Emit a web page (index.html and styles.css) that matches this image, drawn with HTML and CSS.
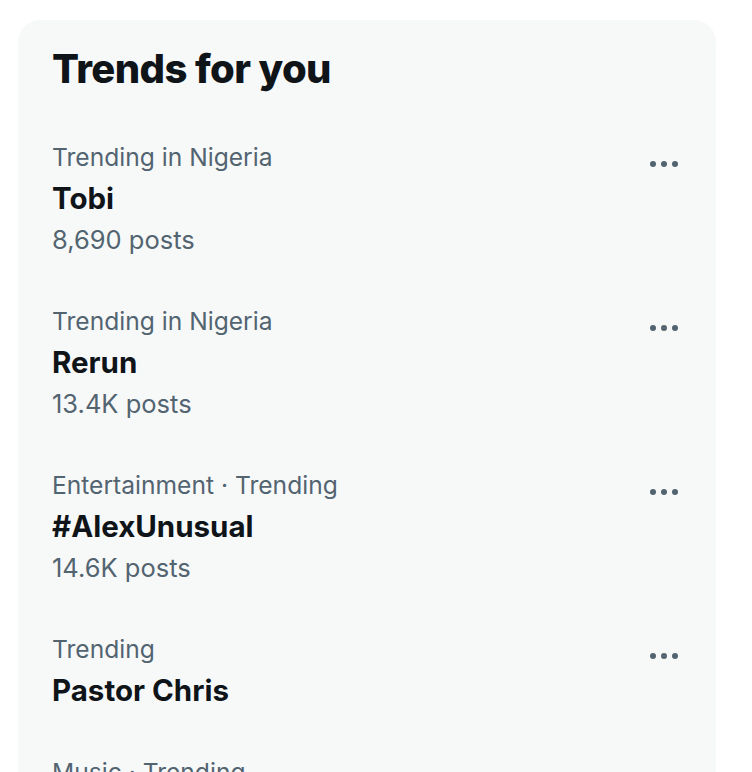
FILE: index.html
```html
<!DOCTYPE html>
<html lang="en">
<head>
<meta charset="utf-8">
<title>Trends for you</title>
<link rel="stylesheet" href="styles.css">
</head>
<body>
<section class="card">
  <h2 class="card-title">Trends for you</h2>
  <div class="trend">
    <div class="trend-info">
      <div class="trend-meta">Trending in Nigeria</div>
      <div class="trend-name">Tobi</div>
      <div class="trend-count">8,690 posts</div>
    </div>
    <button class="trend-more" aria-label="More"><span></span><span></span><span></span></button>
  </div>
  <div class="trend">
    <div class="trend-info">
      <div class="trend-meta">Trending in Nigeria</div>
      <div class="trend-name">Rerun</div>
      <div class="trend-count">13.4K posts</div>
    </div>
    <button class="trend-more" aria-label="More"><span></span><span></span><span></span></button>
  </div>
  <div class="trend">
    <div class="trend-info">
      <div class="trend-meta">Entertainment · Trending</div>
      <div class="trend-name">#AlexUnusual</div>
      <div class="trend-count">14.6K posts</div>
    </div>
    <button class="trend-more" aria-label="More"><span></span><span></span><span></span></button>
  </div>
  <div class="trend">
    <div class="trend-info">
      <div class="trend-meta">Trending</div>
      <div class="trend-name">Pastor Chris</div>
    </div>
    <button class="trend-more" aria-label="More"><span></span><span></span><span></span></button>
  </div>
  <div class="trend">
    <div class="trend-info">
      <div class="trend-meta">Music · Trending</div>
      <div class="trend-name">Asake</div>
      <div class="trend-count">21.2K posts</div>
    </div>
    <button class="trend-more" aria-label="More"><span></span><span></span><span></span></button>
  </div>
</section>
</body>
</html>
```
FILE: styles.css
```css
html, body {
  margin: 0;
  padding: 0;
  background: #ffffff;
}

body {
  font-family: Inter, "Noto Sans", "Liberation Sans", sans-serif;
  color: #0f1419;
  overflow: hidden;
  height: 772px;
}

.card {
  margin: 20px 0 0 18px;
  width: 698px;
  background: #f7f9f9;
  border-radius: 22px;
  padding: 20px 0 0;
  min-height: 900px;
}

.card-title {
  margin: 0 0 19px;
  padding: 0 34px;
  font-size: 40px;
  font-weight: 800;
  line-height: 57px;
  letter-spacing: -0.6px;
}

.trend {
  display: flex;
  align-items: flex-start;
  padding: 20px 38px 20px 34px;
}

.trend-info {
  flex: 1;
  display: flex;
  flex-direction: column;
}

.trend-meta {
  font-size: 24.6px;
  line-height: 42px;
  color: #536471;
}

.trend-name {
  font-size: 29.5px;
  font-weight: 700;
  line-height: 41px;
  color: #0f1419;
}

.trend-count {
  font-size: 25.5px;
  line-height: 41px;
  color: #536471;
}

.trend-more {
  display: flex;
  gap: 5px;
  align-items: center;
  height: 56px;
  padding: 0;
  margin: 0;
  border: 0;
  background: none;
}

.trend-more span {
  width: 6px;
  height: 6px;
  border-radius: 50%;
  background: #536471;
}
```
